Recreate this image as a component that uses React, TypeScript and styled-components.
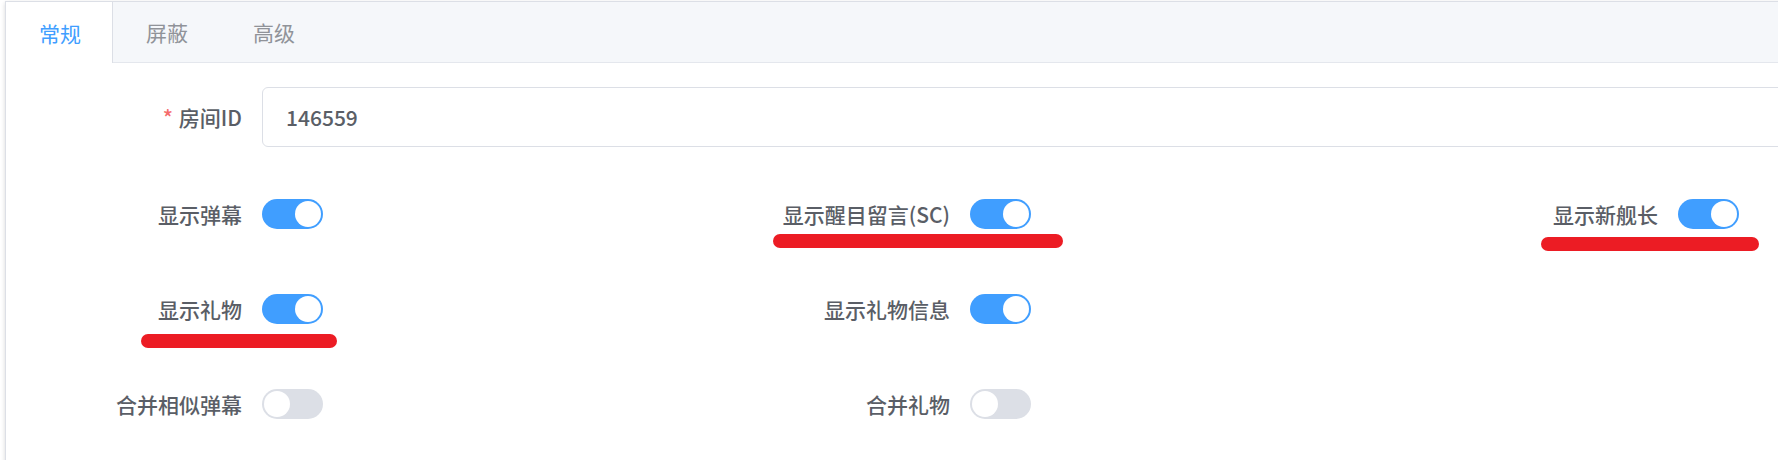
import React from 'react';
import styled, {createGlobalStyle} from 'styled-components';

const GlobalStyle = createGlobalStyle`
    html, body {
        margin: 0;
        padding: 0;
        background: #fff;
    }
    body {
        font-family: "Noto Sans CJK SC", "Noto Sans", "Liberation Sans", sans-serif;
        color: #606266;
    }
`;

type Toggle = {label: string; on: boolean; mark?: {left: number; top: number; width: number}};

const rows: Toggle[][] = [
    [
        {label: '显示弹幕', on: true},
        {label: '显示醒目留言(SC)', on: true, mark: {left: 37, top: 50, width: 290}},
        {label: '显示新舰长', on: true, mark: {left: 97, top: 53, width: 218}},
    ],
    [
        {label: '显示礼物', on: true, mark: {left: 113, top: 55, width: 196}},
        {label: '显示礼物信息', on: true},
    ],
    [
        {label: '合并相似弹幕', on: false},
        {label: '合并礼物', on: false},
    ],
];

const tabs = ['常规', '屏蔽', '高级'];

const App = () => {
    return (
        <StyledPage>
            <GlobalStyle/>
            <StyledCard>
                <StyledTabBar>
                    {tabs.map((t, i) => (
                        <StyledTab key={t} $active={i === 0}>{t}</StyledTab>
                    ))}
                </StyledTabBar>
                <StyledContent>
                    <StyledFormItem $gap={37}>
                        <StyledLabel>
                            <StyledRequired>*</StyledRequired>房间ID
                        </StyledLabel>
                        <StyledInput defaultValue='146559'/>
                    </StyledFormItem>
                    {rows.map((row, r) => (
                        <StyledRow key={r}>
                            {row.map(item => (
                                <StyledFormItem key={item.label} $gap={35}>
                                    <StyledLabel>{item.label}</StyledLabel>
                                    <StyledSwitch $on={item.on}>
                                        <StyledKnob $on={item.on}/>
                                    </StyledSwitch>
                                    {item.mark && (
                                        <StyledMark
                                            style={{left: item.mark.left, top: item.mark.top, width: item.mark.width}}
                                        />
                                    )}
                                </StyledFormItem>
                            ))}
                        </StyledRow>
                    ))}
                </StyledContent>
            </StyledCard>
        </StyledPage>
    );
};

const StyledPage = styled.div`
    width: 1778px;
    height: 460px;
    overflow: hidden;
    padding: 1px 0 0 5px;
    box-sizing: border-box;
`

const StyledCard = styled.div`
    width: 2200px;
    height: 600px;
    border: 1px solid #dcdfe6;
    background: #fff;
    box-shadow: 0 2px 4px 0 rgba(0, 0, 0, 0.12), 0 0 6px 0 rgba(0, 0, 0, 0.04);
`

const StyledTabBar = styled.div`
    display: flex;
    height: 60px;
    background: #f5f7fa;
    border-bottom: 1px solid #e4e7ed;
`

const StyledTab = styled.div<{$active: boolean}>`
    display: flex;
    align-items: center;
    padding: 0 31px 0 33px;
    font-size: 21px;
    color: ${p => (p.$active ? '#409eff' : '#909399')};
    background: ${p => (p.$active ? '#fff' : 'transparent')};
    border-right: 1px solid ${p => (p.$active ? '#dcdfe6' : 'transparent')};
    margin-bottom: ${p => (p.$active ? '-1px' : '0')};
    height: ${p => (p.$active ? '61px' : '60px')};
    box-sizing: border-box;
`

const StyledContent = styled.div`
    padding: 24px 0 0 22px;
`

const StyledRow = styled.div`
    display: grid;
    grid-template-columns: repeat(3, 708px);
`

const StyledFormItem = styled.div<{$gap: number}>`
    position: relative;
    display: flex;
    align-items: center;
    height: 60px;
    margin-bottom: ${p => p.$gap}px;
`

const StyledLabel = styled.label`
    flex: 0 0 234px;
    box-sizing: border-box;
    padding-right: 20px;
    text-align: right;
    font-size: 21px;
    font-weight: 500;
    line-height: 60px;
    color: #5a5e66;
`

const StyledRequired = styled.span`
    color: #f56c6c;
    margin-right: 6px;
`

const StyledInput = styled.input`
    flex: 1;
    height: 60px;
    box-sizing: border-box;
    border: 1px solid #dcdfe6;
    border-radius: 6px;
    padding: 0 23px;
    font: 500 21px "Noto Sans CJK SC", "Noto Sans", sans-serif;
    color: #5a5e66;
    outline: none;
`

const StyledSwitch = styled.span<{$on: boolean}>`
    position: relative;
    display: inline-block;
    width: 61px;
    height: 30px;
    border-radius: 15px;
    background: ${p => (p.$on ? '#409eff' : '#dcdfe6')};
`

const StyledKnob = styled.span<{$on: boolean}>`
    position: absolute;
    top: 2px;
    left: ${p => (p.$on ? '33px' : '2px')};
    width: 26px;
    height: 26px;
    border-radius: 50%;
    background: #fff;
`

const StyledMark = styled.span`
    position: absolute;
    height: 14px;
    border-radius: 7px;
    background: #ec1c24;
`

export default App;
